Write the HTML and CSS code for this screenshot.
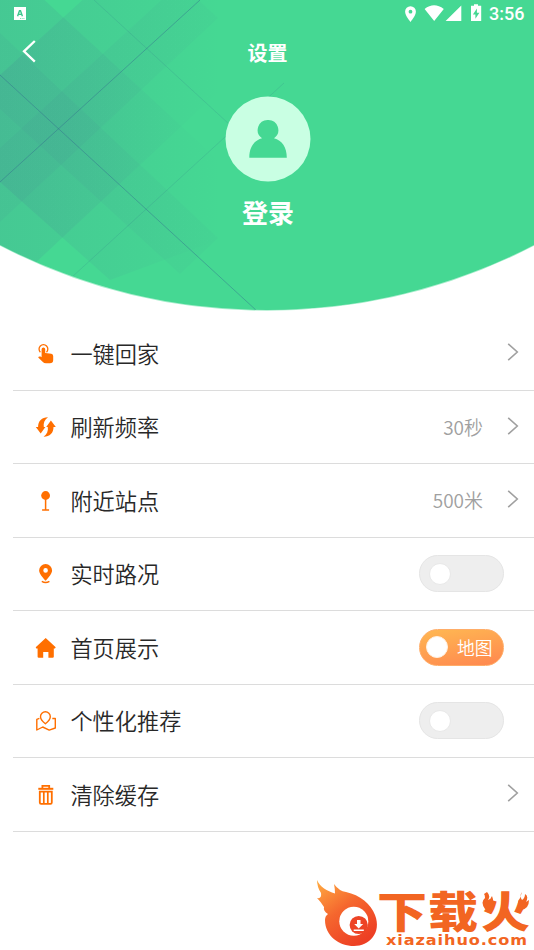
FILE: index.html
```html
<!DOCTYPE html>
<html lang="zh-CN">
<head>
<meta charset="utf-8">
<title>设置</title>
<link rel="stylesheet" href="styles.css">
</head>
<body>
<main class="screen">
  <header class="hero">
    <svg class="hero-bg" viewBox="0 0 534 312" aria-hidden="true">
      <defs>
        <clipPath id="arc"><path d="M0 0H534V245A581 581 0 0 1 0 245Z"/></clipPath>
        <linearGradient id="band" gradientUnits="userSpaceOnUse" x1="0" y1="0" x2="220" y2="0"><stop stop-color="#476b95" stop-opacity=".06"/><stop offset=".3" stop-color="#476b95" stop-opacity=".07"/><stop offset="1" stop-color="#476b95" stop-opacity=".035"/></linearGradient>
        <linearGradient id="soft" gradientUnits="userSpaceOnUse" x1="0" y1="0" x2="220" y2="0"><stop stop-color="#476b95" stop-opacity=".14"/><stop offset=".5" stop-color="#476b95" stop-opacity=".075"/><stop offset="1" stop-color="#476b95" stop-opacity="0"/></linearGradient>
      </defs>
      <path d="M0 245A581 581 0 0 0 534 245" fill="#45d893" stroke="#a5edcb" stroke-width="1.5"/>
      <g clip-path="url(#arc)">
        <path fill="#45d893" d="M0 0H534V312H0Z"/>
        <path fill="url(#soft)" d="M0-41L218 160V240L110 280L0 182Z"/>
        <path fill="url(#soft)" d="M0 75L110-25H218V92L0 296Z"/>
        <path fill="url(#band)" d="M0 33L218 238L180 274L0 109Z"/>
        <path fill="url(#band)" d="M0 148L180-17L218 18L0 222Z"/>
        <g fill="none" stroke="#32658f" stroke-width=".8">
          <path opacity=".5" d="M0 75L257 311M0 182L200 0"/>
          <path opacity=".2" d="M94 0L229 124M72 277L284 83"/>
        </g>
      </g>
    </svg>
    <div class="status">
      <svg class="status-app" viewBox="0 0 12 13"><path fill="#fff" d="M0 0H12V13H0Z"/><path d="M3.6 9.2L5.5 3.8H6.5L8.4 9.2M4.4 7.4H7.6" fill="none" stroke="#3cc78d" stroke-width="1.4"/><path d="M6 11.5h5" stroke="#45d893" stroke-width=".7" stroke-dasharray="1 .7"/></svg>
      <svg class="status-icons" viewBox="0 0 78 18" fill="#fff"><path fill-rule="evenodd" d="M5.5 1.2A5.4 5.4 0 0 0 .1 6.6C.1 10.8 5.5 17 5.5 17S10.9 10.8 10.9 6.6A5.4 5.4 0 0 0 5.5 1.2ZM5.5 4.8A1.9 1.9 0 1 1 5.5 8.6A1.9 1.9 0 0 1 5.5 4.8Z"/><path d="M19.6 4Q29-3.4 38.8 4L29.2 16ZM56.3 .6V16H40.6Z"/><path fill-rule="evenodd" d="M69-.8H73V.8H76.2V16H66V.8H69ZM71.9 3.4L67.9 9.4H70.4V13.8L74.4 7.8H71.9Z"/></svg>
      <span class="time">3:56</span>
    </div>
    <div class="titlebar">
      <svg class="back" viewBox="0 0 14 24"><path d="M12.8 2L2 12.3L12.8 22.6" fill="none" stroke="#fff" stroke-width="2.3"/></svg>
      <h1>设置</h1>
    </div>
    <div class="profile">
      <svg class="avatar" viewBox="0 0 86 86"><circle cx="43" cy="43" r="42.5" fill="#c9ffe3"/><path fill="#45d893" d="M43 24A10 10 0 0 0 37 42.2C29 44.5 24.3 51 24.3 61.7H61.8C61.8 51 57 44.5 49 42.2A10 10 0 0 0 43 24Z"/></svg>
      <span class="login">登录</span>
    </div>
  </header>
  <ul class="settings">
    <li><svg class="icon" viewBox="0 0 20 20"><path d="M4.4 8.2A4.4 4.4 0 1 1 10.5 8.2" fill="none" stroke="#ff6f00" stroke-width="1.3"/><path fill="#ff6f00" d="M5.6 5.2Q5.6 3.4 7.4 3.4T9.2 5.2V8.9L15.3 9.8Q17.2 10.2 17.2 12V16Q17.2 19.3 13.8 19.3H10Q8 19.3 6.6 17.8L2.2 13.6Q2.6 12 4.5 12.6L5.6 13.2Z"/></svg><span class="label">一键回家</span><svg class="chevron" viewBox="0 0 12 20"><path d="M1.2 1.8L10.3 10L1.2 18.2"/></svg></li>
    <li><svg class="icon" viewBox="0 0 20 20" fill="#ff6f00"><path d="M12 .2C6 .1 2 4 2.1 10H-.2L4.7 16.5L9.4 10H7.8C7.2 6 8.6 2.8 12 .2Z"/><path d="M7.6 19.7C13.6 19.8 17.6 15.9 17.5 9.9H19.8L14.9 3.4L10.2 9.9H11.8C12.4 13.9 11 17.1 7.6 19.7Z"/></svg><span class="label">刷新频率</span><span class="value">30秒</span><svg class="chevron" viewBox="0 0 12 20"><path d="M1.2 1.8L10.3 10L1.2 18.2"/></svg></li>
    <li><svg class="icon" viewBox="0 0 20 20"><circle cx="9.6" cy="4.5" r="4.4" fill="#ff6f00"/><path d="M9.6 8V18.8M6.1 19H13.1" stroke="#ff6f00" stroke-width="1.5"/></svg><span class="label">附近站点</span><span class="value">500米</span><svg class="chevron" viewBox="0 0 12 20"><path d="M1.2 1.8L10.3 10L1.2 18.2"/></svg></li>
    <li><svg class="icon" viewBox="0 0 20 20"><path fill="#ff6f00" fill-rule="evenodd" d="M9.6 0A6.5 6.5 0 0 0 3.1 6.5C3.1 10.5 9.6 16.7 9.6 16.7S16.1 10.5 16.1 6.5A6.5 6.5 0 0 0 9.6 0ZM9.6 4.1A2.3 2.3 0 1 1 9.6 8.7A2.3 2.3 0 0 1 9.6 4.1Z"/><path d="M5.8 17.3Q9.6 19.8 13.4 17.3" fill="none" stroke="#ff6f00" stroke-width="1.4"/></svg><span class="label">实时路况</span><span class="switch"><i></i></span></li>
    <li><svg class="icon" viewBox="0 0 20 20"><path fill="#ff6f00" d="M9.7 0L19.7 9.3L19 10.5H17.8V18.7Q17.8 19.8 16.6 19.8H12.4V14H7.2V19.8H2.8Q1.6 19.8 1.6 18.7V10.5H.3L-.3 9.3Z"/></svg><span class="label">首页展示</span><span class="switch on"><i></i><b>地图</b></span></li>
    <li><svg class="icon" viewBox="0 0 20 20"><g fill="none" stroke="#ff6f00" stroke-width="1.4" stroke-linejoin="round"><path d="M9.4.8A4.9 4.9 0 0 0 4.5 5.7C4.5 8.9 9.4 12.7 9.4 12.7S14.3 8.9 14.3 5.7A4.9 4.9 0 0 0 9.4.8Z"/><path d="M3.4 7.3L.8 8.3V19L6.7 16L13.2 19.1L19.3 17V7.5H16.3"/></g></svg><span class="label">个性化推荐</span><span class="switch"><i></i></span></li>
    <li><svg class="icon" viewBox="0 0 20 20"><g fill="none" stroke="#ff6f00"><path d="M2.3 3.8H17.3" stroke-width="2"/><path d="M6.4 3V.9H13.2V3M3.8 6.6H15.8V17.5Q15.8 18.8 14.5 18.8H5.1Q3.8 18.8 3.8 17.5Z" stroke-width="1.8"/><path d="M7.8 7V18M11.8 7V18" stroke-width="1.7"/></g></svg><span class="label">清除缓存</span><svg class="chevron" viewBox="0 0 12 20"><path d="M1.2 1.8L10.3 10L1.2 18.2"/></svg></li>
  </ul>
  <footer class="brand">
    <svg viewBox="0 0 224 72">
      <defs><linearGradient id="flame" x1="0" y1="0" x2=".65" y2="1"><stop stop-color="#ffad42"/><stop offset=".5" stop-color="#f5662e"/><stop offset="1" stop-color="#ed3f24"/></linearGradient></defs>
      <path fill="url(#flame)" d="M7 2C10 9 17 13 25 15.5Q25 11 24 6Q29 13 36 14C50 17 61 26 65 37C72 55 59 68 44 68C29 68 15 58 15 42Q15 38 18 36Q13 33 14 29Q11 24 7 20Q12 21 11 15Q7 9 7 2Z"/>
      <circle cx="43.8" cy="43.3" r="14.5" fill="#fff"/>
      <circle cx="48.7" cy="47" r="9.1" fill="#ed4426"/>
      <path fill="#fff" d="M47 42H50.5V46H53.2L48.7 50.4L44.2 46H47ZM43.7 51.5H53.8V53H43.7Z"/>
      <g class="brand-name"><text x="67" y="50" textLength="50" lengthAdjust="spacingAndGlyphs">下</text><text x="118" y="50" textLength="50" lengthAdjust="spacingAndGlyphs">载</text><text x="171" y="50" textLength="49" lengthAdjust="spacingAndGlyphs">火</text></g>
      <path fill="#f26522" d="M177 14Q181 18 178 22Q181 21 182 18Q186 28 178 32L175 31Q170 24 175 20Q175 17 174 16ZM212 14Q209 18 212 22Q215 20 215 16Q219 18 216 24L219 22Q219 31 211 32Q205 27 210 20Z"/>
      <text class="brand-url" x="76" y="66.5" textLength="142" lengthAdjust="spacingAndGlyphs">xiazaihuo.com</text>
    </svg>
  </footer>
</main>
</body>
</html>
```

FILE: styles.css
```css
* { box-sizing: border-box; }
body { margin: 0; background: #fff; font-family: "Noto Sans CJK SC", sans-serif; }
.screen { width: 534px; height: 950px; display: flex; flex-direction: column; overflow: hidden; }
.hero { position: relative; height: 317px; flex: none; color: #fff; }
.hero-bg { position: absolute; inset: 0 auto auto 0; width: 534px; height: 312px; z-index: -1; }
.status { height: 28px; display: flex; align-items: flex-start; padding: 0 9px 0 14px; }
.status-app { width: 12px; height: 13px; margin-top: 7px; }
.status-icons { width: 78px; height: 18px; margin: 5px 6px 0 auto; overflow: visible; }
.time { width: 36px; font: 500 18px/27px Roboto, sans-serif; white-space: nowrap; }
.titlebar { height: 50px; display: grid; grid-template-columns: 60px 1fr 60px; align-items: center; }
.back { width: 14px; height: 24px; margin: -5px 0 0 22px; }
h1 { margin: 0; text-align: center; font-size: 20px; line-height: 28px; font-weight: 700; padding-left: 1px; }
.profile { display: flex; flex-direction: column; align-items: center; padding: 18px 0 0 2px; }
.avatar { width: 86px; height: 86px; }
.login { margin-top: 11px; font-size: 26px; line-height: 38px; font-weight: 700; }
.settings { margin: 0 0 0 13px; padding: 0; list-style: none; flex: none; }
.settings li { height: 73.5px; display: flex; align-items: center; padding: 0 15px 0 23px; border-bottom: 1px solid #dcdcdc; }
.icon { width: 20px; height: 20px; margin: 1px 14.4px 0 0; overflow: visible; }
.label { margin-top: -1px; font-size: 22.2px; line-height: 32px; color: #282828; font-weight: 350; white-space: nowrap; }
.value { margin: -1px 0 0 auto; font-size: 19px; color: #a0a0a0; font-weight: 350; }
.chevron { width: 12px; height: 20px; margin: -2px 0 0 auto; fill: none; stroke: #a0a0a0; stroke-width: 1.6; }
.value + .chevron { margin-left: 24px; }
.switch { width: 85px; height: 37px; margin-left: auto; margin-right: 15px; border: 1px solid #e5e5e5; border-radius: 19px; background: #eee; display: flex; align-items: center; padding-left: 9px; }
.switch i { width: 22px; height: 22px; border: 1px solid #e8e8e8; border-radius: 50%; background: #fff; }
.switch.on { border-color: #ffad68; background: linear-gradient(170deg, #ffb852, #ff874f); padding-left: 6px; }
.switch.on i { border-color: #fff0e0; }
.switch b { margin: -1px 0 0 9px; color: #fff; font-size: 17.8px; font-weight: 350; }
.brand { margin: auto 0 0 310px; width: 224px; height: 72px; }
.brand svg { display: block; width: 224px; height: 72px; overflow: visible; }
.brand-name { font: 900 43px "Noto Sans CJK SC", sans-serif; fill: #f26522; }
.brand-url { font: 700 14px "DejaVu Sans", sans-serif; letter-spacing: .8px; fill: #f26522; }
```
